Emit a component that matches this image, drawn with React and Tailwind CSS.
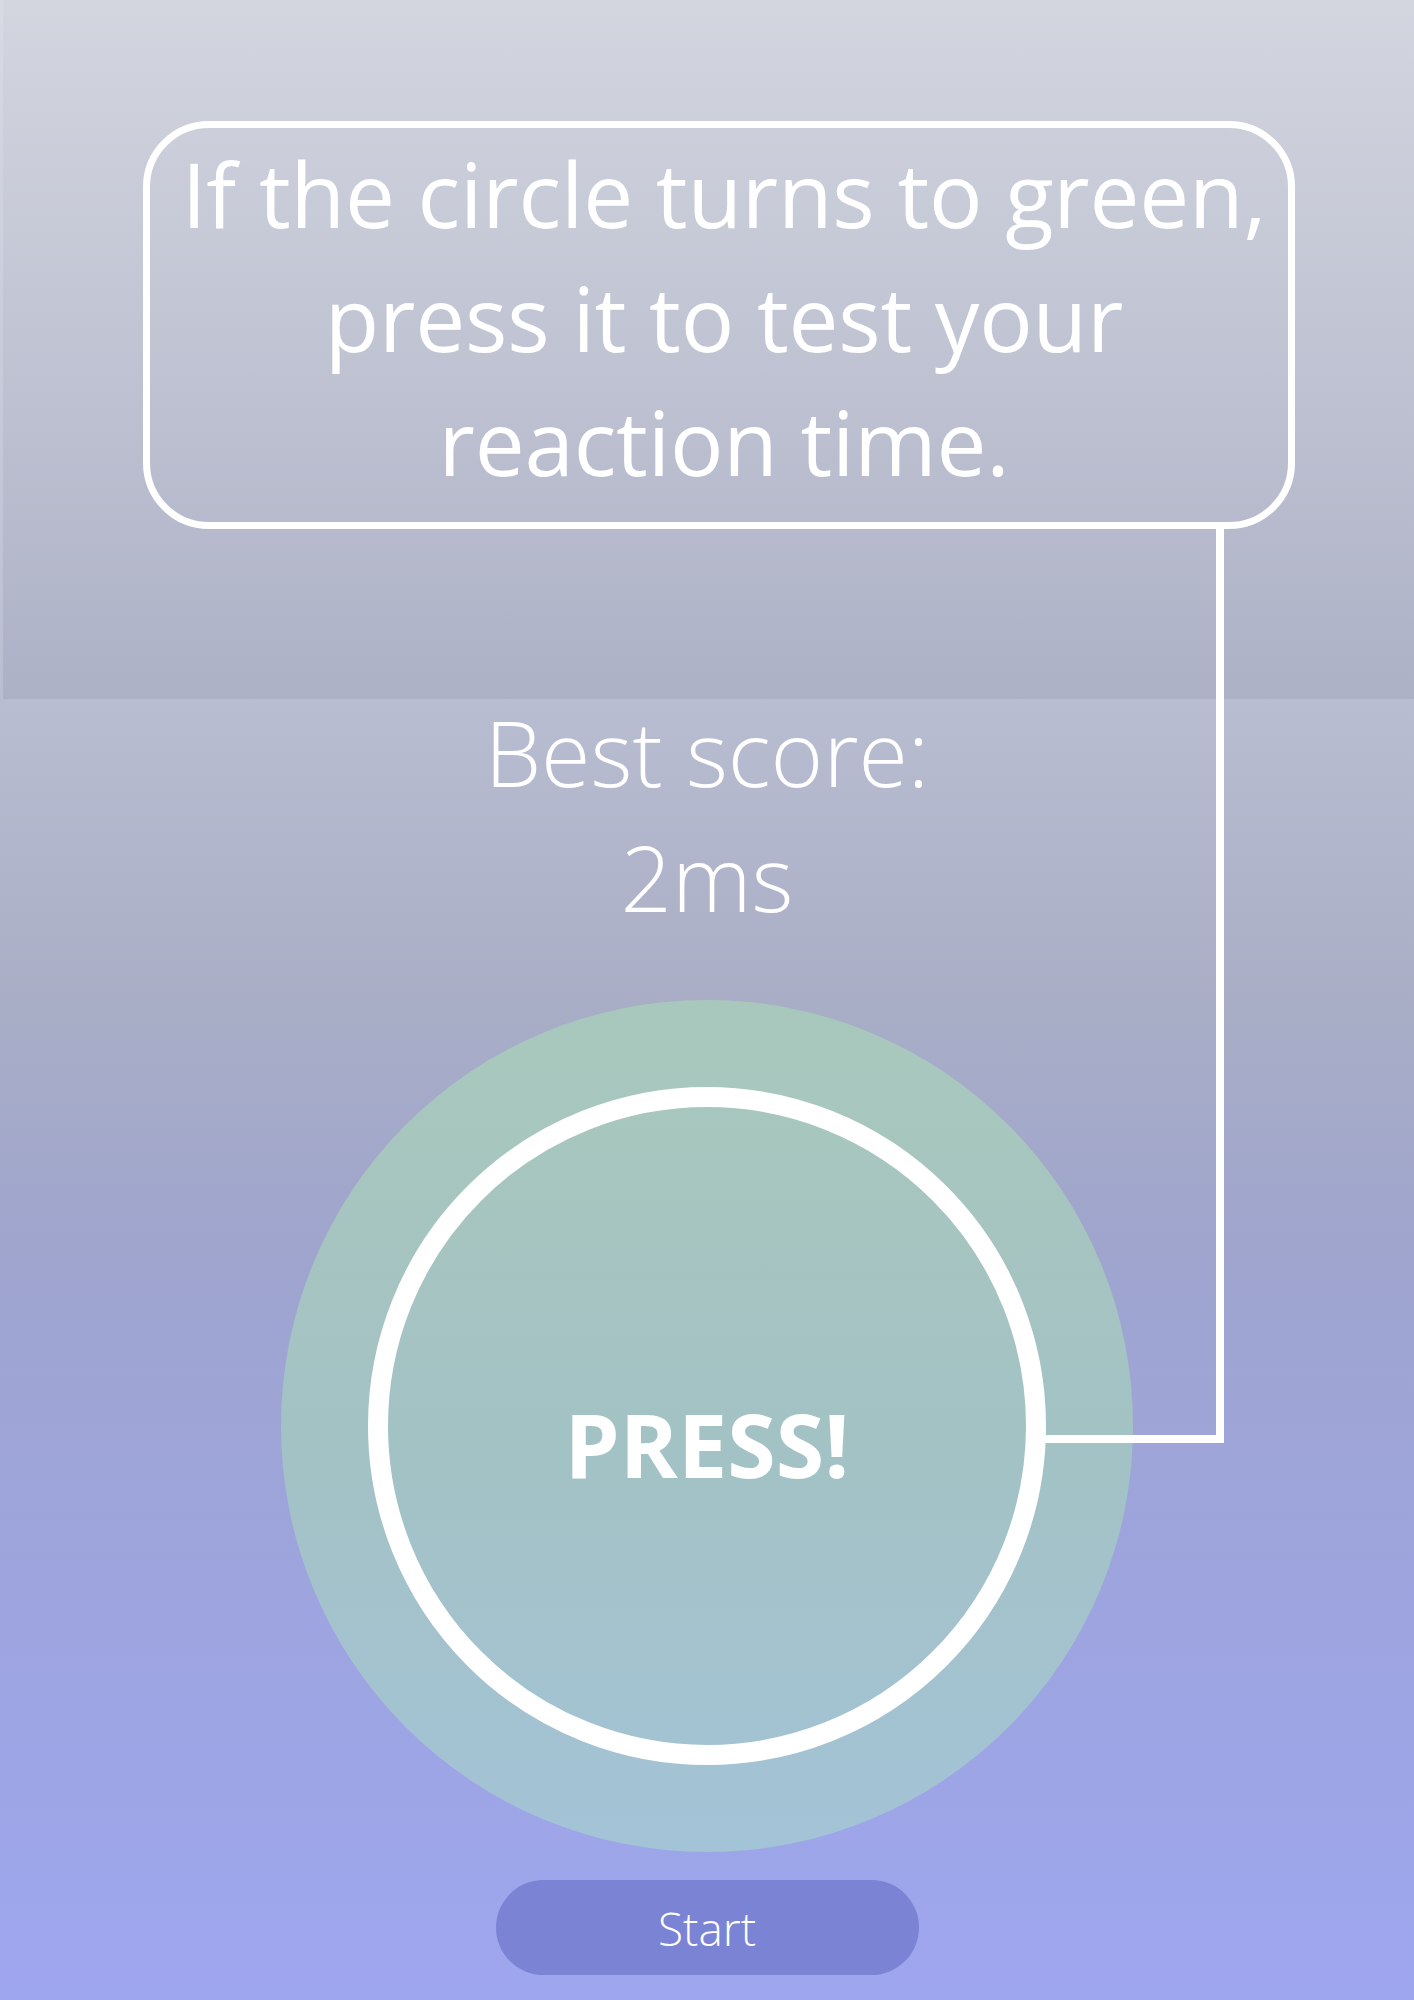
export default function App() {
  return (
    <div
      className="relative w-full h-[2000px] overflow-hidden bg-[linear-gradient(180deg,#d8dbe4_0%,#b9bdd1_35%,#a9aec6_50%,#9fa5cd_62%,#9da4df_80%,#9ea6ef_100%)] text-white"
      style={{ fontFamily: "'Open Sans', 'Noto Sans', sans-serif" }}
    >
      {/* header */}
      <header className="ml-[3px] h-[699px] pt-[121px] bg-[linear-gradient(180deg,#d3d6df_0%,#adb1c6_100%)]">
        <div className="ml-[140px] w-[1152px] h-[408px] rounded-[66px] border-[7px] border-white pt-[4px] pl-[10px] text-center text-[89px] tracking-[-0.2px] leading-[124px] font-normal">
          <span className="block whitespace-nowrap">If the circle turns to green,</span>
          <span className="block whitespace-nowrap">press it to test your</span>
          <span className="block whitespace-nowrap">reaction time.</span>
        </div>
      </header>

      {/* best score */}
      <div className="-mt-[9px] text-center text-[90px] leading-[125px] font-light">
        <p>Best score:</p>
        <p>2ms</p>
      </div>

      {/* circle */}
      <div className="mt-[60px] mx-auto w-[852px] h-[852px] rounded-full bg-[linear-gradient(180deg,#a9c8bc_0%,#a3c2c4_50%,#a3c3d7_100%)] flex items-center justify-center">
        <button className="w-[678px] h-[678px] rounded-full border-[20px] border-white flex items-center justify-center">
          <span className="mt-[36px] text-[88px] leading-[88px] font-bold text-white">PRESS!</span>
        </button>
      </div>

      {/* start button */}
      <div className="mt-[28px] flex justify-center">
        <button className="w-[423px] h-[95px] rounded-full bg-[#7b83d4] text-[46px] leading-none font-light text-white">
          Start
        </button>
      </div>

      {/* connector line */}
      <div className="absolute left-[1043px] top-[529px] w-[181px] h-[914px] border-r-[8px] border-b-[8px] border-white pointer-events-none" />
    </div>
  );
}
